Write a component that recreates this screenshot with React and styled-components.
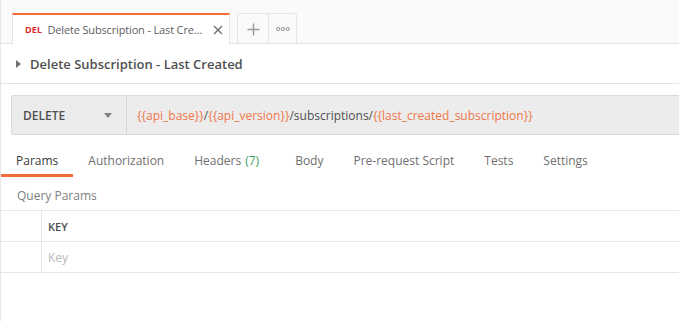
import React from "react";
import styled, { createGlobalStyle } from "styled-components";

const Global = createGlobalStyle`
  html, body { margin: 0; padding: 0; background: #fff; }
  body { font-family: "Open Sans", "Noto Sans", sans-serif; color: #505050; }
  * { box-sizing: border-box; }
`;

const Page = styled.div`
  width: 679px;
  height: 321px;
  overflow: hidden;
  border-left: 1px solid #e6e6e6;
  background: #fff;
`;

const TabBar = styled.div`
  height: 44px;
  background: #fafafa;
  border-bottom: 1px solid #e3e3e3;
  display: flex;
  align-items: flex-end;
  padding-left: 11px;
`;

const ReqTab = styled.div`
  width: 218px;
  height: 31px;
  margin-bottom: -1px;
  background: #fff;
  border-top: 2px solid #f26b3a;
  border-left: 1px solid #e6e6e6;
  border-right: 1px solid #e6e6e6;
  display: flex;
  align-items: center;
  padding: 0 6px 0 12px;
  gap: 5px;
`;

const Method = styled.span`
  font-size: 9px;
  font-weight: 700;
  color: #e02b2b;
  letter-spacing: 0.2px;
`;

const TabTitle = styled.span`
  flex: 1;
  font-size: 11px;
  letter-spacing: -0.15px;
  color: #606060;
  white-space: nowrap;
  overflow: hidden;
  text-overflow: ellipsis;
`;

const Close = styled.svg`
  width: 10px;
  height: 10px;
  flex: none;
`;

const IconGroup = styled.div`
  display: flex;
  margin-left: 7px;
  height: 31px;
  margin-bottom: -1px;
  border: 1px solid #e6e6e6;
  border-bottom: none;
  border-radius: 3px 3px 0 0;
`;

const IconBtn = styled.div`
  width: ${(p) => p.w}px;
  display: flex;
  align-items: center;
  justify-content: center;
  border-left: ${(p) => (p.first ? "none" : "1px solid #e6e6e6")};
`;

const TitleRow = styled.div`
  height: 40px;
  border-bottom: 1px solid #e3e3e3;
  display: flex;
  align-items: center;
  padding: 1px 0 0 15px;
  gap: 9px;
`;

const Caret = styled.span`
  width: 0;
  height: 0;
  border-top: 4px solid transparent;
  border-bottom: 4px solid transparent;
  border-left: 5px solid #707070;
`;

const Title = styled.span`
  font-size: 13px;
  font-weight: 600;
  color: #505050;
`;

const UrlSection = styled.div`
  padding: 11px 0 0 10px;
`;

const UrlBar = styled.div`
  height: 40px;
  display: flex;
  background: #ececec;
  border: 1px solid #dadada;
  border-right: none;
  border-radius: 3px 0 0 3px;
`;

const MethodSelect = styled.div`
  width: 115px;
  border-right: 1px solid #d8d8d8;
  display: flex;
  align-items: center;
  justify-content: space-between;
  padding: 0 14px 0 11px;
  font-size: 12px;
  font-weight: 600;
  color: #505050;
`;

const DropCaret = styled.span`
  width: 0;
  height: 0;
  border-left: 4px solid transparent;
  border-right: 4px solid transparent;
  border-top: 5px solid #808080;
`;

const UrlText = styled.div`
  flex: 1;
  display: flex;
  align-items: center;
  padding-left: 10px;
  font-size: 12px;
  color: #505050;
  white-space: nowrap;
`;

const Var = styled.span`
  color: #f0774a;
`;

const Tabs = styled.div`
  display: flex;
  margin-top: 15px;
  height: 27px;
`;

const TabItem = styled.div`
  padding: 1px 15px 0;
  font-size: 12px;
  color: ${(p) => (p.active ? "#3a3a3a" : "#707070")};
  border-bottom: 3px solid ${(p) => (p.active ? "#f26b3a" : "transparent")};
  display: flex;
  align-items: flex-start;
  line-height: 20px;
`;

const Count = styled.span`
  color: #3aa564;
  margin: 0 6px 0 4px;
`;

const SectionLabel = styled.div`
  font-size: 12px;
  color: #808080;
  padding: 10px 0 0 16px;
  height: 33px;
`;

const Table = styled.div`
  border-top: 1px solid #e6e6e6;
`;

const Row = styled.div`
  display: flex;
  height: 31px;
  border-bottom: 1px solid #e6e6e6;
`;

const Handle = styled.div`
  width: 41px;
  border-right: 1px solid #e6e6e6;
`;

const Cell = styled.div`
  flex: 1;
  display: flex;
  align-items: center;
  padding-left: 6px;
  font-size: ${(p) => (p.head ? "11px" : "12px")};
  font-weight: ${(p) => (p.head ? 600 : 400)};
  color: ${(p) => (p.head ? "#505050" : "#b8b8b8")};
`;

const tabs = ["Params", "Authorization", "Headers", "Body", "Pre-request Script", "Tests", "Settings"];

export default function App() {
  return (
    <Page>
      <Global />
      <TabBar>
        <ReqTab>
          <Method>DEL</Method>
          <TabTitle>Delete Subscription - Last Created</TabTitle>
          <Close viewBox="0 0 10 10">
            <path d="M1 1L9 9M9 1L1 9" stroke="#707070" strokeWidth="1.4" />
          </Close>
        </ReqTab>
        <IconGroup>
          <IconBtn w={30} first>
            <svg width="13" height="13" viewBox="0 0 13 13">
              <path d="M6.5 0.5V12.5M0.5 6.5H12.5" stroke="#9a9a9a" strokeWidth="1.4" />
            </svg>
          </IconBtn>
          <IconBtn w={28}>
            <svg width="14" height="6" viewBox="0 0 14 6">
              <circle cx="2.2" cy="3" r="1.6" fill="none" stroke="#888" strokeWidth="0.9" />
              <circle cx="7" cy="3" r="1.6" fill="none" stroke="#888" strokeWidth="0.9" />
              <circle cx="11.8" cy="3" r="1.6" fill="none" stroke="#888" strokeWidth="0.9" />
            </svg>
          </IconBtn>
        </IconGroup>
      </TabBar>
      <TitleRow>
        <Caret />
        <Title>Delete Subscription - Last Created</Title>
      </TitleRow>
      <UrlSection>
        <UrlBar>
          <MethodSelect>
            DELETE
            <DropCaret />
          </MethodSelect>
          <UrlText>
            <Var>{"{{api_base}}"}</Var>/<Var>{"{{api_version}}"}</Var>/subscriptions/
            <Var>{"{{last_created_subscription}}"}</Var>
          </UrlText>
        </UrlBar>
      </UrlSection>
      <Tabs>
        {tabs.map((t, i) => (
          <TabItem key={t} active={i === 0}>
            {t}
            {t === "Headers" && <Count>(7)</Count>}
          </TabItem>
        ))}
      </Tabs>
      <SectionLabel>Query Params</SectionLabel>
      <Table>
        <Row>
          <Handle />
          <Cell head>KEY</Cell>
        </Row>
        <Row>
          <Handle />
          <Cell>Key</Cell>
        </Row>
      </Table>
    </Page>
  );
}
